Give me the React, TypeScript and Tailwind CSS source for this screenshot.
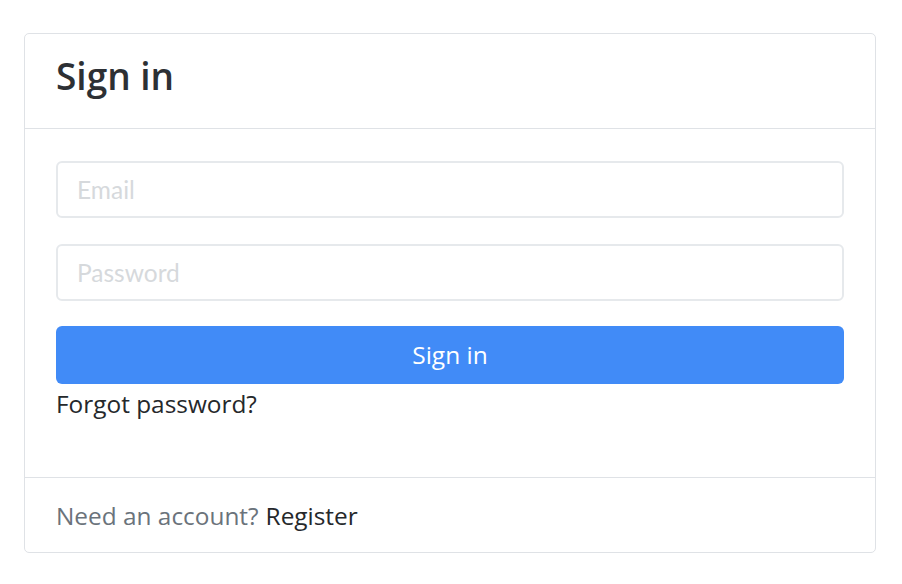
import React from "react";

export default function App() {
  return (
    <div className="min-h-[584px] bg-white pt-[33px] px-[24px] font-['Open_Sans',sans-serif]">
      <div className="w-[852px] border border-[#dfe2e6] rounded-[5px] bg-white">
        <div className="h-[95px] border-b border-[#dfe2e6] px-[31px] pb-[11px] flex items-center">
          <h1 className="text-[37px] font-semibold text-[#2d3034] leading-none">Sign in</h1>
        </div>
        <div className="px-[31px] pt-[32px] h-[349px] border-b border-[#dfe2e6]">
          <input
            type="email"
            placeholder="Email"
            className="block w-full h-[57px] border-2 border-[#e6e9ec] rounded-[6px] px-[19px] text-[24.5px] font-['Lato',sans-serif] placeholder:text-[#d6d9dc] outline-none"
          />
          <input
            type="password"
            placeholder="Password"
            className="block w-full h-[57px] mt-[26px] border-2 border-[#e6e9ec] rounded-[6px] px-[19px] text-[24.5px] font-['Lato',sans-serif] placeholder:text-[#d6d9dc] outline-none"
          />
          <button type="button" className="block w-full h-[58px] mt-[25px] rounded-[6px] bg-[#418bf7] text-white text-[24.5px]">
            Sign in
          </button>
          <a href="#" className="block mt-[2px] text-[24.4px] text-[#25282b] leading-[36px]">Forgot password?</a>
        </div>
        <div className="h-[74px] px-[31px] pt-[2px] flex items-center text-[24.4px]">
          <span className="text-[#6b737b]">Need an account?</span>
          <a href="#" className="ml-[7px] text-[#25282b]">Register</a>
        </div>
      </div>
    </div>
  );
}
